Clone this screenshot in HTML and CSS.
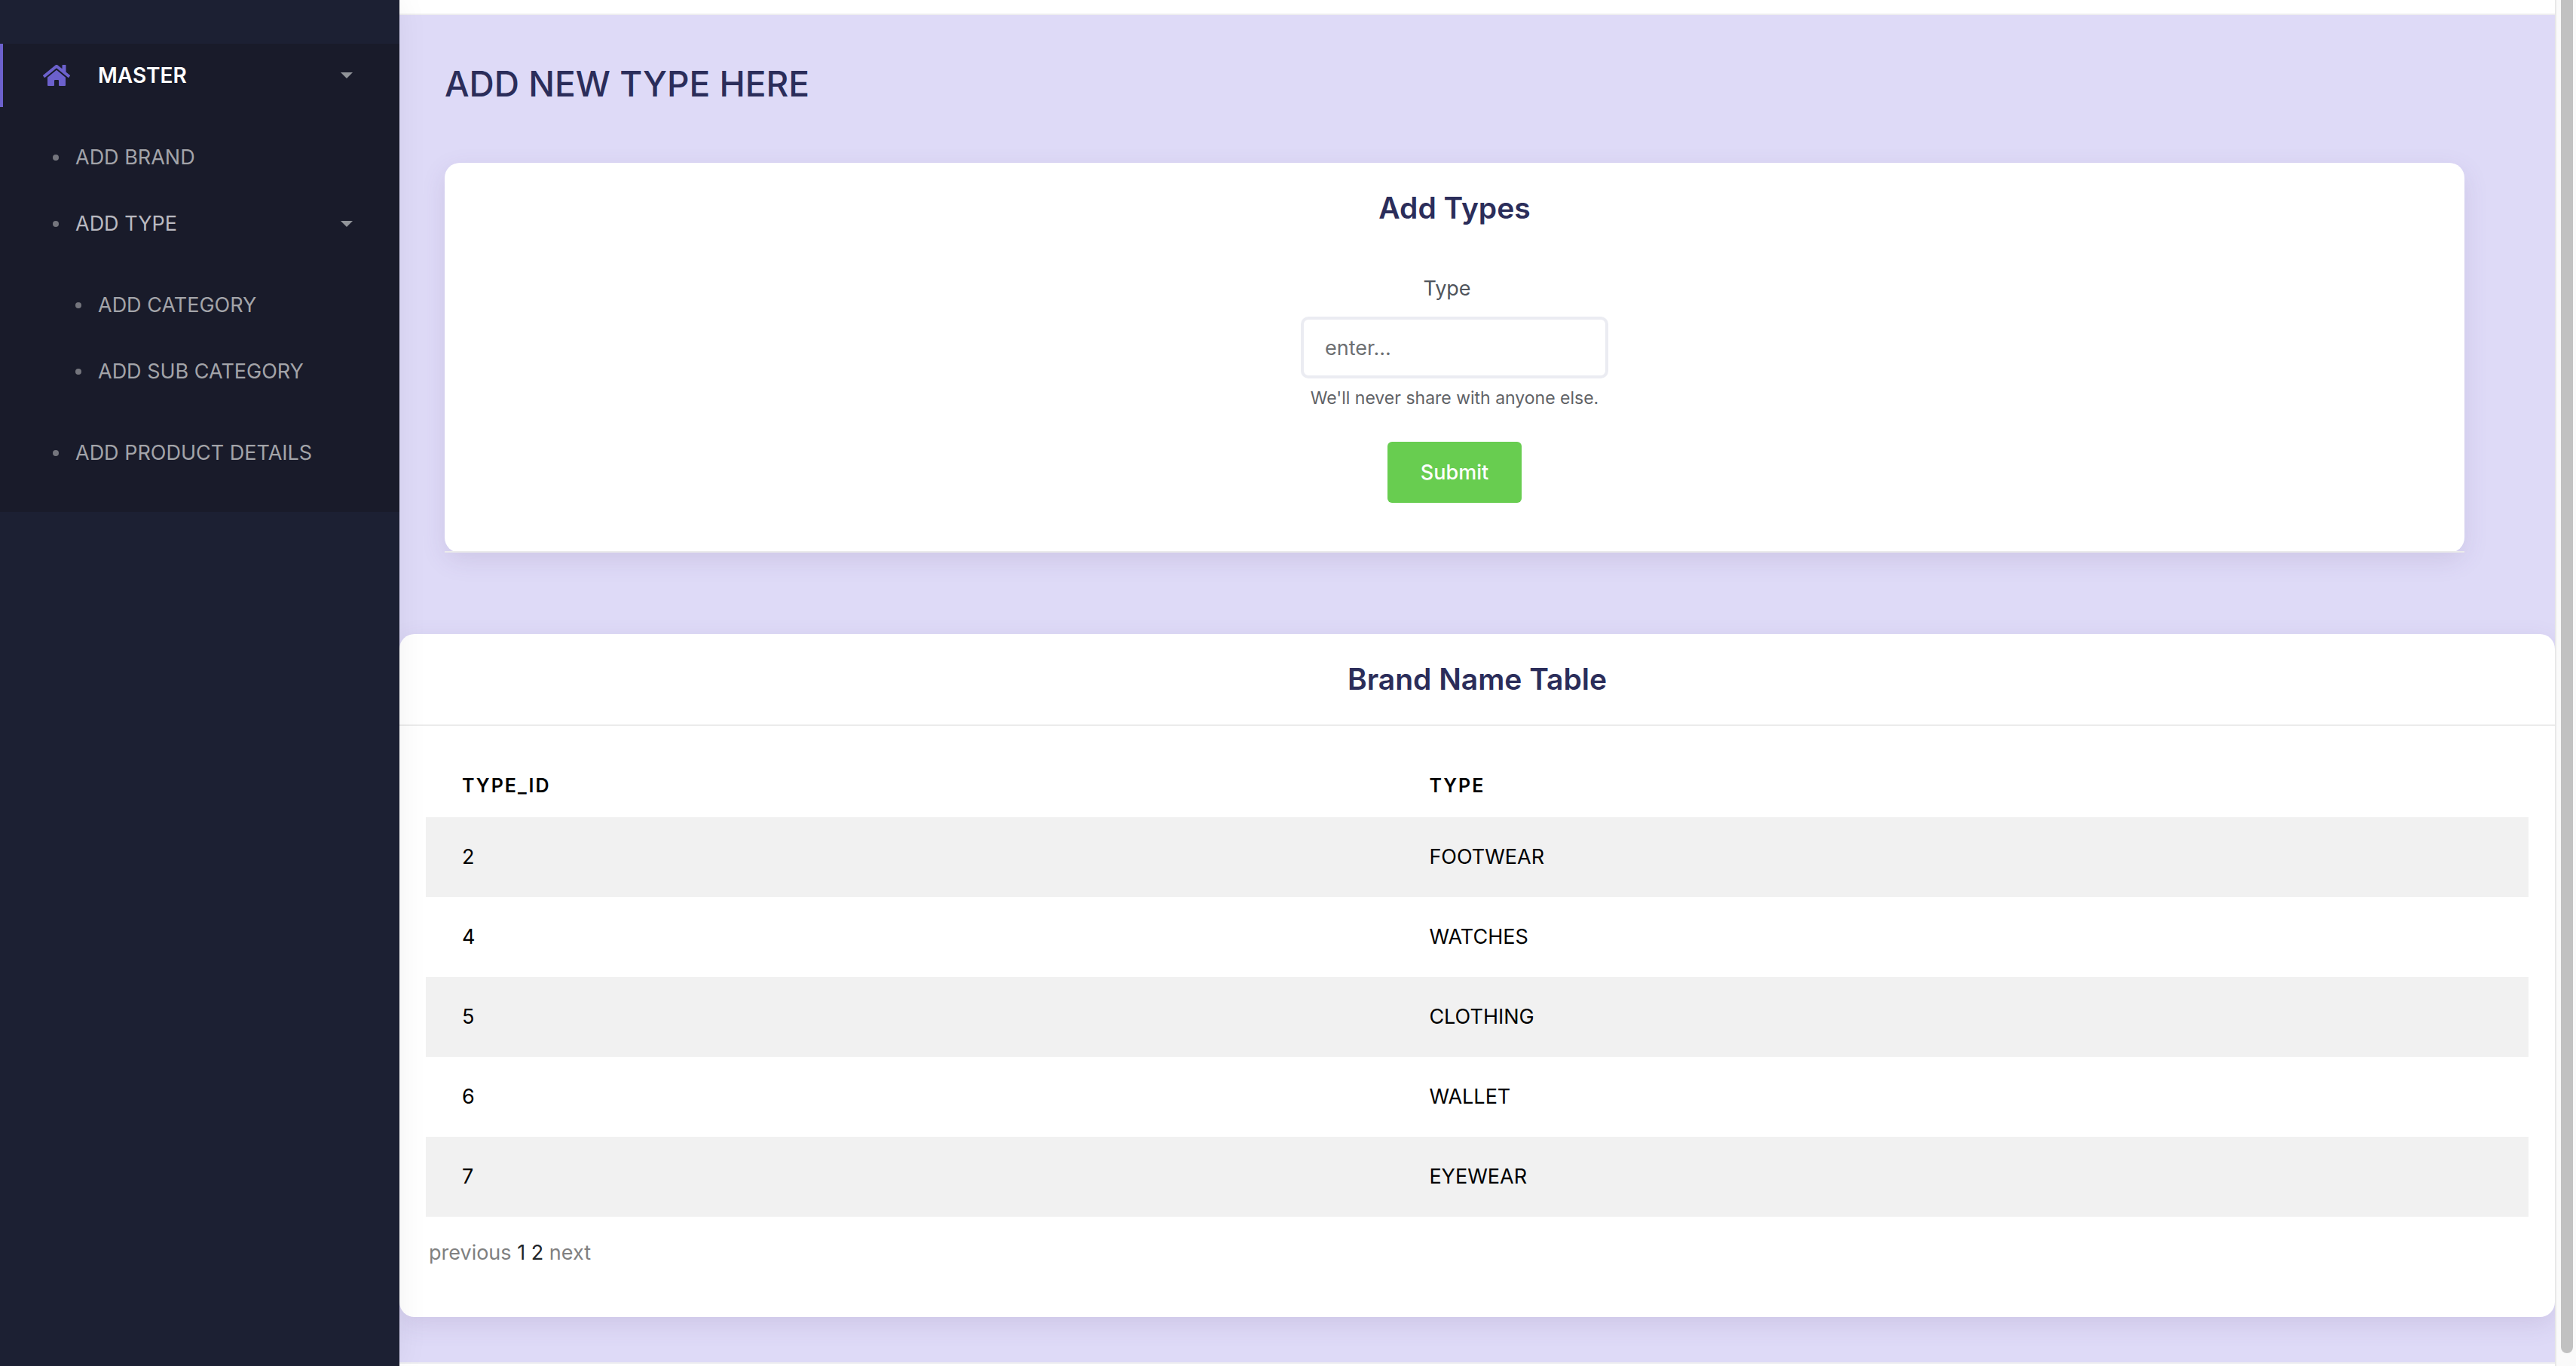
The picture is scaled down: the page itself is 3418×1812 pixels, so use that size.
FILE: index.html
```html
<!DOCTYPE html>
<html lang="en">
<head>
<meta charset="utf-8">
<title>Add Type</title>
<link rel="stylesheet" href="styles.css">
</head>
<body>
<div class="app">
  <nav class="sidebar" aria-label="Main">
    <ul class="menu">
      <li>
        <a class="menu-link menu-link-master" href="#master">
          <svg class="home-icon" viewBox="0 0 576 448" aria-hidden="true"><path fill="currentColor" d="M280 116 96 268v164a16 16 0 0 0 16 16l112-1a16 16 0 0 0 16-16v-95a16 16 0 0 1 16-16h64a16 16 0 0 1 16 16v95a16 16 0 0 0 16 16l112 1a16 16 0 0 0 16-16V267L296 116a12 12 0 0 0-16 0zM572 220l-84-69V12a12 12 0 0 0-12-12h-56a12 12 0 0 0-12 12v73l-89-74a48 48 0 0 0-61 0L4 220a12 12 0 0 0-2 16l26 32a12 12 0 0 0 17 1L280 75a12 12 0 0 1 16 0l235 194a12 12 0 0 0 17-2l26-31a12 12 0 0 0-2-16z"/></svg>
          <span>MASTER</span>
          <i class="caret"></i>
        </a>
        <ul class="submenu">
          <li><a class="menu-link" href="#brand"><i class="dot"></i><span>ADD BRAND</span></a></li>
          <li>
            <a class="menu-link menu-link-open" href="#type"><i class="dot"></i><span>ADD TYPE</span><i class="caret"></i></a>
            <ul class="submenu submenu-nested">
              <li><a class="menu-link" href="#category"><i class="dot"></i><span>ADD CATEGORY</span></a></li>
              <li><a class="menu-link" href="#sub-category"><i class="dot"></i><span>ADD SUB CATEGORY</span></a></li>
            </ul>
          </li>
          <li><a class="menu-link" href="#product"><i class="dot"></i><span>ADD PRODUCT DETAILS</span></a></li>
        </ul>
      </li>
    </ul>
  </nav>
  <div class="page">
    <header class="topbar"></header>
    <main class="content">
      <h1 class="page-title">ADD NEW TYPE HERE</h1>
      <section class="card form-card">
        <div class="form-card-inner">
          <h2 class="card-title">Add Types</h2>
          <form class="type-form">
            <label class="form-label" for="type">Type</label>
            <input class="form-input" id="type" type="text" placeholder="enter..." aria-describedby="type-help">
            <small class="form-help" id="type-help">We'll never share with anyone else.</small>
            <button class="submit" type="submit">Submit</button>
          </form>
        </div>
      </section>
      <section class="card table-card">
        <div class="card-header"><h2 class="card-title">Brand Name Table</h2></div>
        <div class="card-body">
          <table class="table">
            <thead><tr><th class="col-id" scope="col">TYPE_ID</th><th scope="col">TYPE</th></tr></thead>
            <tbody>
              <tr><td>2</td><td>FOOTWEAR</td></tr>
              <tr><td>4</td><td>WATCHES</td></tr>
              <tr><td>5</td><td>CLOTHING</td></tr>
              <tr><td>6</td><td>WALLET</td></tr>
              <tr><td>7</td><td>EYEWEAR</td></tr>
            </tbody>
          </table>
          <div class="pager"><span class="pager-off">previous</span> <a href="#p1">1</a> <a href="#p2">2</a> <span class="pager-off">next</span></div>
        </div>
      </section>
    </main>
    <footer class="footer"></footer>
  </div>
  <div class="scroll-track"><div class="scroll-thumb"></div></div>
</div>
</body>
</html>
```
FILE: styles.css
```css
*, *::before, *::after { box-sizing: border-box; }
body {
  margin: 0;
  background: #fff;
  color: #000;
  font: 400 27px/42px Inter, "Liberation Sans", sans-serif;
}
ul { margin: 0; padding: 0; list-style: none; }
a { color: inherit; text-decoration: none; }
h1, h2 { margin: 0; color: #2b2d5a; }

.app { display: flex; height: 100vh; overflow: hidden; }

/* Sidebar */
.sidebar {
  position: relative;
  z-index: 1;
  flex: none;
  width: 530px;
  padding-top: 58px;
  background: #1c2033;
  box-shadow: 0 0 40px rgba(0, 0, 0, 0.06);
}
.menu { padding-bottom: 34px; background: #191b2a; }
.menu-link {
  display: flex;
  align-items: center;
  height: 88px;
  padding: 0 62px 0 70px;
  color: #a3a4a9;
}
.menu-link-open { color: #babac1; }
.menu-link-master {
  height: 84px;
  padding-left: 53px;
  border-left: 4px solid #6c61cc;
  color: #fff;
  font-size: 28px;
  font-weight: 600;
}
.home-icon { width: 36px; height: 28px; margin-right: 37px; color: #6c61cc; }
.caret {
  margin-left: auto;
  border: 8px solid transparent;
  border-top-color: #919499;
  border-bottom: 0;
}
.dot { width: 8px; height: 8px; margin-right: 22px; border-radius: 50%; background: #74757d; }
.submenu { padding-top: 23px; }
.submenu-nested { padding: 20px 0; }
.submenu-nested .menu-link { padding-left: 100px; }

/* Page */
.page { display: flex; flex: 1; flex-direction: column; min-width: 0; }
.topbar { flex: none; height: 20px; border-bottom: 2px solid #ededf0; }
.content { flex: none; padding: 60px 0; background: #dedaf7; }
.page-title { padding: 0 60px; font-size: 46px; font-weight: 500; line-height: 62px; }
.card {
  border-radius: 20px;
  background: #fff;
  box-shadow: 0 10px 32px rgba(100, 70, 120, 0.13);
}
.card-title { font-size: 39px; font-weight: 600; line-height: 60px; text-align: center; }
.form-card { margin: 74px 120px 108px 60px; }
.form-card-inner { padding: 30px 60px 64px; border-bottom: 2px solid #ebebeb; }
.type-form { display: flex; flex-direction: column; align-items: center; }
.form-label { margin: 56px 20px 0 0; color: #50555c; }
.form-input {
  width: 408px;
  height: 82px;
  margin-top: 16px;
  padding: 0 28px;
  border: 4px solid #ebecf2;
  border-radius: 10px;
  background: #fff;
  color: #212529;
  font: inherit;
}
.form-input::placeholder { color: #6d6f72; opacity: 1; }
.form-help { margin-top: 8px; color: #5f6266; font-size: 23px; line-height: 36px; }
.submit {
  width: 178px;
  height: 81px;
  margin-top: 40px;
  border: 0;
  border-radius: 6px;
  background: #68cd50;
  color: #fff;
  font: inherit;
  font-weight: 500;
}
.card-header { padding: 30px; border-bottom: 2px solid #ebebeb; }
.card-body { padding: 36px 35px 64px; }
.table { width: 100%; border-collapse: collapse; table-layout: fixed; }
.col-id { width: 46%; }
.table th { height: 85px; padding: 0 48px; font-size: 25px; font-weight: 600; text-align: left; letter-spacing: 2px; }
.table td { height: 106px; padding: 0 48px; }
.table tbody tr:nth-child(odd) { background: #f1f1f1; }
.pager { padding: 27px 4px 0; color: #212529; }
.pager-off { color: #808080; }
.footer { flex: 1; border-top: 2px solid #ededf0; }

/* Scrollbar */
.scroll-track {
  flex: none;
  width: 28px;
  padding: 0 4px 17px 6px;
  border-left: 2px solid #e8e8e8;
  background: #fafafa;
}
.scroll-thumb { height: 100%; border-radius: 0 0 8px 8px; background: #c1c1c1; }
```
